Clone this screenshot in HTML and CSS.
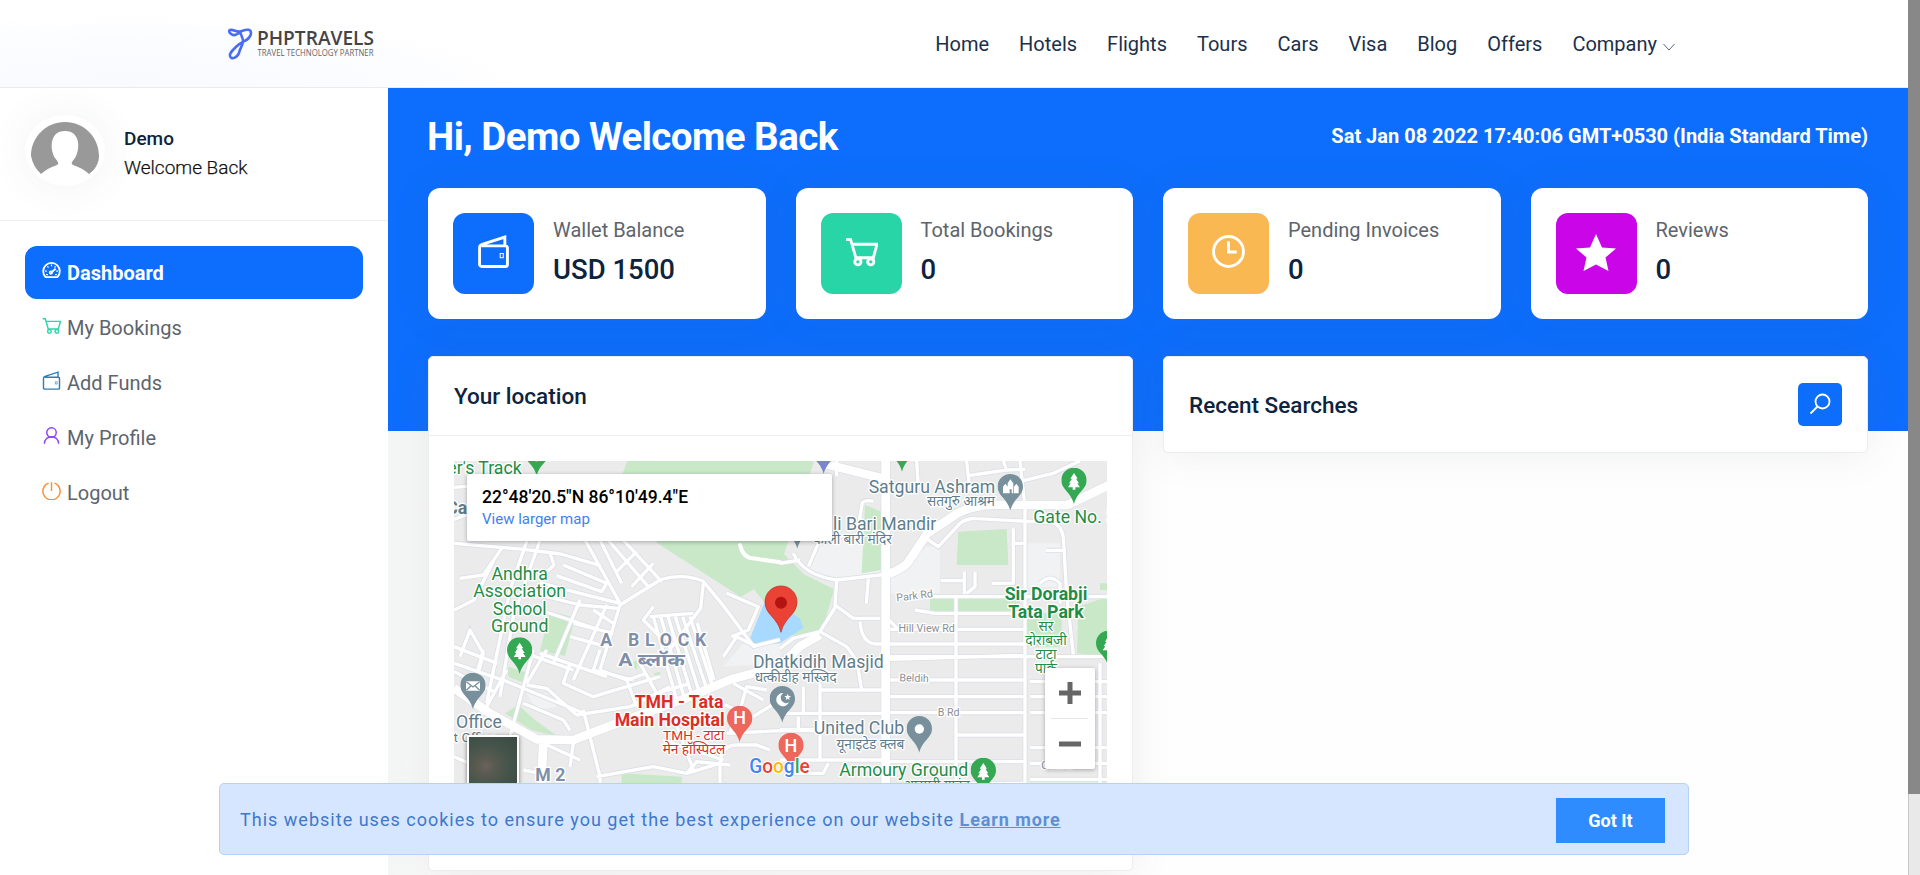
FILE: index.html
```html
<!DOCTYPE html>
<html lang="en">
<head>
<meta charset="utf-8">
<title>Dashboard - PHPTRAVELS</title>
<link rel="stylesheet" href="styles.css">
</head>
<body>
<svg class="sprite" aria-hidden="true">
  <symbol id="i-wallet" viewBox="0 0 32 32"><path d="M4.500 10.500h23a2 2 0 0 1 2 2v16a2 2 0 0 1-2 2h-23a2 2 0 0 1-2-2v-16a3.500 3.500 0 0 1 2.500-3.500L27 2v8"/><path class="dot" d="M22.500 18h3v4h-3z"/></symbol>
  <symbol id="i-cart" viewBox="0 0 32 32"><path d="M1 4.500h4.500l5 17.500h17l3.500-13H8"/><circle cx="12.500" cy="26" r="3"/><circle cx="25" cy="26" r="3"/></symbol>
  <symbol id="i-pin-tree" viewBox="0 0 76 110"><path d="M38 0C16 0 0 17 0 38c0 28 30 36 38 72 8-36 38-44 38-72C76 17 60 0 38 0z"/><path class="pin-art" d="M38 16 27 33h5L23 47h5L20 59h14v7h8v-7h14l-8-12h5l-9-14h5z"/></symbol>
  <symbol id="i-pin" viewBox="0 0 76 110"><path d="M38 0C16 0 0 17 0 38c0 28 30 36 38 72 8-36 38-44 38-72C76 17 60 0 38 0z"/></symbol>
</svg>
<div class="page">
  <header class="topbar">
    <svg class="logo" viewBox="0 0 154 40">
      <path class="logo-mark" d="M6 7C3 6 1 3 3 2c4-1 7 3 12 1s9-2 9 2c0 7-9 8-14 13-4 4-8 7-7 10 1 4 7 2 9-3 1-5 4-8 4-12 0-3-2-6-3-9M6 7c3 1 6-2 9-4"/>
      <text class="logo-name" x="30" y="17" textLength="117" lengthAdjust="spacingAndGlyphs">PHPTRAVELS</text>
      <text class="logo-tag" x="30.500" y="28" textLength="116" lengthAdjust="spacingAndGlyphs">TRAVEL TECHNOLOGY PARTNER</text>
    </svg>
    <nav class="menu">
      <a>Home</a><a>Hotels</a><a>Flights</a><a>Tours</a><a>Cars</a><a>Visa</a><a>Blog</a><a>Offers</a>
      <a>Company<svg class="caret" viewBox="0 0 12 8"><path d="M.5 1 6 7l5.500-6"/></svg></a>
    </nav>
  </header>
  <div class="columns">
    <aside class="sidebar">
      <div class="profile">
        <div class="avatar"><svg viewBox="0 0 68 52"><path d="M10 52A33 33 0 0 1 0 34C0 15 15 0 34 0s34 15 34 34c0 7-4 14-10 18-4-4-10-7-16-9-3-2 0-4 2-7 5-8 6-27-10-27S19 28 24 36c2 3 5 5 2 7-6 2-12 5-16 9z"/></svg></div>
        <div><div class="name">Demo</div><div class="greet">Welcome Back</div></div>
      </div>
      <nav class="side-nav">
        <a class="item active"><svg class="ico dash" viewBox="0 0 32 32"><path d="M6 27a14 14 0 1 1 20 0zM16 19l7-6"/><circle cx="15" cy="19.500" r="2"/><path class="ticks" d="M16 6v3M9 9l2 2M23 9l-2 2M5 17h3M27 17h-3M7 23h3M25 23h-3"/></svg>Dashboard</a>
        <a class="item"><svg class="ico green"><use href="#i-cart"/></svg>My Bookings</a>
        <a class="item"><svg class="ico blue"><use href="#i-wallet"/></svg>Add Funds</a>
        <a class="item"><svg class="ico violet" viewBox="0 0 32 32"><circle cx="16" cy="11" r="8"/><path d="M4 30c0-16 24-16 24 0"/></svg>My Profile</a>
        <a class="item"><svg class="ico orange" viewBox="0 0 32 32"><path d="M16 2v15M11 3.500a14.500 14.500 0 1 0 10 0"/></svg>Logout</a>
      </nav>
    </aside>
    <main class="content">
      <div class="hero-back"></div>
      <div class="inner">
        <div class="welcome"><h1>Hi, Demo Welcome Back</h1><p>Sat Jan 08 2022 17:40:06 GMT+0530 (India Standard Time)</p></div>
        <div class="stats">
          <div class="stat"><span class="tile t-blue"><svg class="big"><use href="#i-wallet"/></svg></span><div><p>Wallet Balance</p><h4>USD 1500</h4></div></div>
          <div class="stat"><span class="tile t-green"><svg class="big"><use href="#i-cart"/></svg></span><div><p>Total Bookings</p><h4>0</h4></div></div>
          <div class="stat"><span class="tile t-amber"><svg class="big" viewBox="0 0 32 32"><circle cx="16" cy="16" r="14.500"/><path d="M16 6v10.500h8"/></svg></span><div><p>Pending Invoices</p><h4>0</h4></div></div>
          <div class="stat"><span class="tile t-pink"><svg class="star" viewBox="0 0 40 37"><path d="m20 0 6 13.500 14 1-10.500 9L32.500 37 20 30.500 7.500 37l3-13.500L0 14.500l14-1z"/></svg></span><div><p>Reviews</p><h4>0</h4></div></div>
        </div>
        <div class="panels">
          <section class="panel">
            <h3>Your location</h3>
            <div class="map-body">
              <div class="map">
                <svg class="map-art" viewBox="42 33 1959 1152">
                  <defs>
                    <g id="minor">
                      <path d="M42 112 190 100 400 80M42 208l60-22M42 280l210 18 110 14 120 35M265 260 210 420 140 760M300 270 220 500 180 740M60 385l70-10 55-80M330 310l12 35-42 40M370 345l130 55-15 25-135-48M300 398l120 32 120 30M260 425l160 40 115 10M435 270l50 90 55 100M480 270l65 130M500 265l125 145M545 265l120 130M530 365l60-60M575 410l65-70"/>
                      <path d="M540 465 660 390q70-22 130 4 60 70 110 140l40 55 80-20M790 400l-8 75-90 120M540 465 480 660M500 465 400 690M420 450 340 640M300 480l180 60M400 520l120 30M390 560l110 30M300 610l200 70M860 430l95 40-30 70-50 20M460 480l60 40M42 480l60-30 60-120M42 590l130 50M60 620l30-80 40 70-20 80M42 640l160 55 230 95M42 665l120 60M130 600l-30 110M200 660l-60 110M280 600l-70 260M200 590l200 70M320 600l-60 100M390 640l-20 60 90 40 200-60M480 660l80 30 60-20M560 690l30 80M260 705l60 10 90 80 160-25 120-60M250 760l120 50 20 30M430 780l50 200 0 205M470 980l170-30 100 20 30-35 100 10M400 880l-10 70M310 880l110 50M250 960l50 10M42 920l160 70M160 940v120M640 470l-30 40 60 60M600 640l50 90 100-30"/>
                      <path d="M840 1185V950q0-65 50-65h60l40 15M860 850l160-8h120M740 970l100-30M670 870l180 60M700 800l60 160M850 620l40-60 60 30M880 700l90 50M800 740l90 40-20 70M900 780l20-70 60 10M940 800l80-50M480 600l-20 60 120 30"/>
                      <path d="M1060 310q30 65 130 80l147-17M1190 390l-5 75 55 40h80M1190 465l-50 80-80 20-40 30M1140 545l80 45 30 40 15 90M1260 515q5 67 50 67h445M1285 385l-6 75M1255 230l12-72q10-10 33-4M1105 350l30-70M1020 340l60-10M1140 720h197M1020 790h317M1090 710v85M1140 700v230M1075 800v35M1020 838h120M1020 930h317M1050 930v40h100l15-30M1190 33v45"/>
                      <path d="m1430 33 5 80M1580 33l10 90M1590 76l110-16 55-2M1690 33l10 27M1740 33l15 137M1750 92l90-22 80-37M1450 260l45 30 65-70q25-17 50-14l230 12q25 10 30 45l10 170 20 180M1720 235v165h-65M1720 280h35M1818 301h60M1502 392h72M1573 365v68M1605 365v45l-25 20M1480 440h521M1425 480l60 10h270M1548 440v490M1350 538h405M1350 628l405-12M1350 690h405M1350 740h405M1350 788h405M1548 855h207M1350 935h405M1560 1000h195M1548 930v160M1337 620h660M1755 170v1015M1770 695h231M1770 740h231M1770 788h231M1770 893h231M1770 940h231M1770 988h231M1980 640v545M1800 400q30-30 60 0v60M1337 500l40 40"/>
                      <path d="M640 500l70 250M662 500l70 240M684 500l70 230M706 500l70 220M728 500l70 210M750 500l65 200M772 520l50 170M630 500l130-10"/>
                    </g>
                    <g id="major">
                      <path d="M42 715 150 790l140 78 110 2 120-46 220-80 130-55 150-40 60-60 60-34M310 870l-14 315M1140 38l200 50M1337 33v1152M1337 375q60-20 75-50l50-75 90-60q60-30 140-25h190l130-62"/>
                    </g>
                  </defs>
                  <rect x="42" y="33" width="1959" height="1152" class="land"/>
                  <path class="plain" d="M1150 270h180v100l-140 20-90-30zM1350 370l110-80h40v140h-150zM1760 280h100v130h-100zM850 650l60-70 110-10v70zM260 730h60l30 40-60 10z"/>
                  <g class="park">
                    <path d="M562 33h560l-90 280 60 60 90 45-40 140-70 10-60-60-70-90-40 22-250-160L540 90z"/>
                    <path d="m330 483 75 20-30 115-75-15zM205 650l60 20-10 30-50-20zM195 790l40-25 50 45 70 50-80-20zM545 970l180 10v210H545zM1275 165l50 20v175l-60 10zM1555 245l145-8 5 108-155 0zM1470 445h270v40h-270zM1755 490h110v100h-110zM1915 470l86-30v180l-90-10zM1980 400h21v20h-21zM640 670l20-5v25zM570 640l25-10-5 30z"/>
                  </g>
                  <path class="water" d="M972 460 930 565l18 22 72-7 70-47-10-27-60-45z"/>
                  <use href="#minor" class="case"/><use href="#major" class="case wide"/>
                  <use href="#minor" class="road"/><use href="#major" class="road wide"/>
                  <path class="road trail" d="M900 285q10 40 40 40l80 12"/>
                  <g class="pin-green">
                    <use href="#i-pin-tree" x="252" y="-32" width="76" height="110"/><use href="#i-pin-tree" x="201" y="562" width="76" height="110"/>
                    <use href="#i-pin-tree" x="1348" y="-45" width="76" height="110"/><use href="#i-pin-tree" x="1864" y="53" width="76" height="110"/>
                    <use href="#i-pin-tree" x="1968" y="542" width="76" height="110"/><use href="#i-pin-tree" x="1592" y="923" width="76" height="110"/>
                  </g>
                  <g class="pin-slate">
                    <use href="#i-pin" x="61" y="668" width="76" height="110"/><use href="#i-pin" x="1673" y="72" width="76" height="110"/>
                    <use href="#i-pin" x="1034" y="186" width="76" height="110"/><use href="#i-pin" x="989" y="708" width="76" height="110"/><use href="#i-pin" x="1400" y="798" width="76" height="110"/>
                  </g>
                  <use href="#i-pin" class="pin-indigo" x="1113" y="-38" width="76" height="110"/>
                  <g class="pin-red"><use href="#i-pin" x="861" y="767" width="76" height="110"/><use href="#i-pin" x="1015" y="848" width="76" height="110"/></g>
                  <circle cx="1438" cy="837" r="14" class="white"/>
                  <path class="white" d="M78 694h42v28H78zM1689 130v-20l7-9 7 9v20zM1703 130v-30l8-12 9 12v30h-5v-12h-6v12zM1722 130v-20l7-9 7 9v20z"/>
                  <path class="envelope" d="m79 695 20 16 20-16M79 721l14-14M119 721l-14-14"/>
                  <path class="white" d="M1030 729a20 20 0 1 0 17 28 16 16 0 1 1-17-28zM1043 731l3 7h7l-6 5 2 7-6-4-6 4 2-7-6-5h7z"/>
                  <text class="h" x="899" y="822">H</text><text class="h" x="1053" y="906">H</text>
                  <g class="label green">
                    <text x="245" y="72" class="end">er's Track</text><text x="239" y="389">Andhra</text><text x="239" y="442">Association</text><text x="239" y="495">School</text><text x="239" y="547">Ground</text>
                    <text x="1391" y="978">Armoury Ground</text><text class="hi" x="1490" y="1020">आरमरी ग्राउंड</text><text x="1780" y="220" class="start">Gate No. 3</text>
                    <text class="bold" x="1818" y="450">Sir Dorabji</text><text class="bold" x="1818" y="503">Tata Park</text>
                    <text class="hi" x="1818" y="543">सर</text><text class="hi" x="1818" y="586">दोराबजी</text><text class="hi" x="1818" y="627">टाटा</text><text class="hi" x="1818" y="668">पार्क</text>
                  </g>
                  <g class="label slate">
                    <text x="1476" y="128">Satguru Ashram</text><text class="hi" x="1563" y="169">सतगुरु आश्रम</text>
                    <text x="1334" y="240">li Bari Mandir</text><text class="hi" x="1238" y="282">काली बारी मंदिर</text>
                    <text x="1135" y="654">Dhatkidih Masjid</text><text class="hi" x="1067" y="695">धत्कीडीह मस्जिद</text>
                    <text x="1257" y="853">United Club</text><text class="hi" x="1291" y="898">यूनाइटेड क्लब</text>
                    <text x="117" y="835">Office</text><text class="hi" x="95" y="876">st Office</text><text class="bold" x="50" y="192">Ca</text>
                  </g>
                  <g class="label area"><text x="640" y="589" textLength="318">A BLOCK</text><text x="635" y="649" textLength="200" lengthAdjust="spacingAndGlyphs">A ब्लॉक</text><text x="331" y="994">M 2</text></g>
                  <g class="label red"><text class="bold" x="717" y="775">TMH - Tata</text><text class="bold" x="689" y="827">Main Hospital</text><text class="hi" x="761" y="870">TMH - टाटा</text><text class="hi" x="762" y="911">मेन हॉस्पिटल</text></g>
                  <g class="label street"><text x="1424" y="448" transform="rotate(-7 1424 440)">Park Rd</text><text x="1460" y="547">Hill View Rd</text><text x="1422" y="695" transform="rotate(2 1422 690)">Beldih</text><text x="1526" y="798">B Rd</text><text x="1850" y="957">C Rd E</text></g>
                  <path class="marker" d="M1023 408c-27 0-48 21-48 48 0 38 38 46 48 91 10-45 48-53 48-91 0-27-21-48-48-48z"/><circle cx="1023" cy="458" r="18" class="marker-dot"/>
                  <text class="google" x="928" y="969" textLength="181" lengthAdjust="spacingAndGlyphs"><tspan fill="#4285f4">G</tspan><tspan fill="#ea4335">o</tspan><tspan fill="#fbbc04">o</tspan><tspan fill="#4285f4">g</tspan><tspan fill="#34a853">l</tspan><tspan fill="#ea4335">e</tspan></text>
                </svg>
                <div class="place"><b>22°48'20.5"N 86°10'49.4"E</b><a>View larger map</a></div>
                <div class="zoom"><svg viewBox="0 0 50 101"><path class="zoom-sign" d="M14 25h22M25 14v22M14 76h22"/><path class="zoom-line" d="M6 50.500h37"/></svg></div>
                <div class="satellite"></div>
              </div>
            </div>
          </section>
          <section class="panel recent">
            <h2>Recent Searches</h2>
            <span class="search"><svg viewBox="0 0 22 22"><circle cx="13.500" cy="8.500" r="7"/><path d="M8.500 13.500 1.500 20.500"/></svg></span>
          </section>
        </div>
      </div>
    </main>
  </div>
  <div class="cookie"><p>This website uses cookies to ensure you get the best experience on our website <a>Learn more</a></p><button>Got It</button></div>
</div>
<div class="scrollbar"><div class="thumb"></div></div>
</body>
</html>
```
FILE: styles.css
```css
* { box-sizing: border-box; }
body { margin: 0; height: 875px; overflow: hidden; display: flex; font-family: Roboto, "Noto Sans", sans-serif; color: #0d233e; background: #fff; }
h1, h2, h3, h4, p { margin: 0; }
.sprite { position: absolute; width: 0; height: 0; }
.page { width: 1908px; height: 875px; position: relative; overflow: hidden; }
.scrollbar { width: 12px; background: #e9e9e9; border-left: 1px solid #c8c8c8; }
.thumb { height: 794px; background: #888; margin-left: -1px; }

.topbar { height: 88px; border-bottom: 1px solid #ebebec; display: flex; justify-content: space-between; padding: 0 233px 0 227px; background: radial-gradient(ellipse 410px 75px at 130px 88px, #f8faff 0, #fbfcff 60%, #fff 100%); }
.logo { width: 154px; height: 40px; margin-top: 28px; overflow: visible; }
.logo-mark { fill: none; stroke: #4a6cf3; stroke-width: 2.6; }
.logo-name { font: 600 19.500px "Open Sans", sans-serif; fill: #444; }
.logo-tag { font: 400 9px "Open Sans", sans-serif; fill: #666; }
.menu { display: flex; gap: 30px; align-items: center; font-size: 20px; color: #1c3049; }
.caret { width: 12px; height: 8px; margin-left: 6px; fill: none; stroke: #56657a; stroke-width: 1; }

.columns { display: flex; height: 787px; }
.sidebar { width: 388px; background: #fff; }
.profile { height: 133px; border-bottom: 1px solid #eee; padding: 27px 25px; display: flex; gap: 19px; font-size: 19px; line-height: 29px; }
.profile .name { font-weight: 500; padding-top: 9px; }
.greet { color: #111; font-weight: 300; -webkit-text-stroke: .25px; }
.avatar { width: 80px; height: 71px; border-radius: 50%; box-shadow: 0 0 40px rgba(82,85,90,.08); padding: 7px 6px; }
.avatar svg { width: 68px; height: 52px; display: block; fill: #999; }
.side-nav { padding: 25px; display: grid; gap: 2px; }
.item { height: 53px; padding-left: 17px; display: flex; align-items: center; gap: 6px; font-size: 20px; color: #5d646d; border-radius: 12px; }
.active { background: #0d6efd; color: #fff; font-weight: 700; width: 338px; }
.ico { width: 19px; height: 19px; fill: none; stroke-width: 2.4; margin-top: -4px; }
.dot { stroke-width: 1; }
.dash { stroke: #fff; stroke-width: 3; }
.ticks { stroke-width: 2; }
.green { stroke: #28d5a7; }
.blue { stroke: #2a7ebd; }
.violet { stroke: #8b43f5; }
.orange { stroke: #fb8a2e; }

.content { width: 1520px; display: grid; background: linear-gradient(90deg, #f4f5f5 0, #f9f9f9 40px, #fdfdfd 730px, #fefefe 760px); }
.hero-back, .inner { grid-area: 1 / 1; }
.hero-back { height: 343px; background: #0d6efd; }
.inner { padding: 0 40px; }
.welcome { height: 100px; display: flex; align-items: center; justify-content: space-between; color: #fff; padding-bottom: 4px; }
.welcome h1 { font-size: 38.500px; font-weight: 700; letter-spacing: -.55px; margin-left: -1px; }
.welcome p { font-size: 20px; font-weight: 700; }
.stats { display: grid; grid-template-columns: repeat(4, 1fr); gap: 30px; }
.stat { height: 131px; background: #fff; border-radius: 12px; padding: 25px; display: flex; gap: 19px; box-shadow: 0 0 40px rgba(82,85,90,.08); }
.tile { width: 81px; height: 81px; border-radius: 12px; display: grid; place-items: center; }
.big { width: 33px; height: 33px; margin-top: -4px; fill: none; stroke: #fff; stroke-width: 2.8; }
.star { width: 40px; height: 37px; margin-top: -3px; fill: #fff; }
.t-blue { background: #0d6efd; }
.t-green { background: #28d5a7; }
.t-amber { background: #f9b851; }
.t-pink { background: #ca06e8; }
.stat p { font-size: 20px; line-height: 24px; padding-top: 5px; color: #5d646d; }
.stat h4 { font-size: 27.500px; font-weight: 500; line-height: 34px; margin-top: 11px; }

.panels { display: grid; grid-template-columns: 1fr 1fr; gap: 30px; margin-top: 37px; align-items: start; }
.panel { background: #fff; border-radius: 5px; border: 1px solid #ededee; box-shadow: 0 0 40px rgba(82,85,90,.1); }
.panel h3, .panel h2 { font-size: 22.500px; font-weight: 500; }
.panel h3 { height: 79px; line-height: 78px; padding-left: 25px; border-bottom: 1px solid #eee; }
.map-body { padding: 25px; height: 434px; }
.map { position: relative; height: 384px; overflow: hidden; }
.map-art { width: 100%; height: 100%; display: block; }
.recent { height: 97px; display: flex; justify-content: space-between; align-items: center; padding: 0 25px; }
.search { width: 44px; height: 43px; border-radius: 5px; background: #0d6efd; display: grid; place-items: center; }
.search svg { width: 22px; height: 22px; fill: none; stroke: #fff; stroke-width: 1.8; margin-top: -2px; }

.land { fill: #ebebeb; }
.plain { fill: #f1f2f4; }
.park { fill: #c8e8c8; }
.water { fill: #a8daff; }
.case { fill: none; stroke: #dcdfe5; stroke-width: 15; }
.road { fill: none; stroke: #fff; stroke-width: 10; stroke-linejoin: round; }
.case.wide { stroke-width: 30; }
.road.wide { stroke-width: 26; }
.trail { stroke-width: 12; stroke-linecap: round; }
.pin-green { fill: #34a853; }
.pin-slate { fill: #78909c; }
.pin-indigo { fill: #7986cb; }
.pin-red { fill: #ee675c; }
.pin-art, .white { fill: #fff; }
.envelope { fill: none; stroke: #78909c; stroke-width: 4; }
.h { font-size: 54px; font-weight: 500; fill: #fff; text-anchor: middle; }
.label { font-size: 53px; text-anchor: middle; stroke: #fff; stroke-width: 8; stroke-linejoin: round; paint-order: stroke; }
.label .hi { font-size: 41px; }
.label .bold { font-weight: 700; }
.label .end { text-anchor: end; }
.label .start { text-anchor: start; }
.label.green { fill: #1e8e46; }
.label.slate { fill: #607d8b; }
.label.red { fill: #db2d27; }
.label.area { fill: #7f8fa9; font-weight: 700; }
.label.street { fill: #8a8f94; font-size: 32px; }
.marker { fill: #ea4335; stroke: #c5221f; stroke-width: 2; }
.marker-dot { fill: #b31412; }
.google { font-size: 60px; font-weight: 500; stroke: #fff; stroke-width: 6; paint-order: stroke; }
.place { position: absolute; left: 13px; top: 13px; width: 365px; height: 67px; padding: 12px 15px; background: #fff; border-radius: 2px; box-shadow: 0 1px 4px rgba(0,0,0,.3); color: #000; }
.place b { display: block; font-size: 17.500px; font-weight: 500; line-height: 22px; }
.place a { font-size: 15px; line-height: 23px; color: #427fed; display: block; }
.zoom { position: absolute; left: 591px; top: 207px; width: 50px; height: 101px; background: #fff; border-radius: 2px; box-shadow: 0 1px 4px rgba(0,0,0,.3); }
.zoom-sign { stroke: #666; stroke-width: 5; }
.zoom-line { stroke: #e6e6e6; stroke-width: 1; }
.satellite { position: absolute; left: 13px; top: 274px; width: 52px; height: 52px; border: 2px solid #fff; border-radius: 2px; box-shadow: 0 1px 4px rgba(0,0,0,.5); background: radial-gradient(ellipse at 35% 60%, #6b625c 0, #5a5a50 20%, #46554b 50%, #3a4a42 100%); }

.cookie { position: absolute; left: 219px; top: 783px; width: 1470px; height: 72px; border: 1px solid #b3d1fb; border-radius: 5px; background: #d7e6ff; display: flex; align-items: center; justify-content: space-between; padding: 3px 23px 0 20px; color: #3f78c9; font-size: 18px; letter-spacing: 1.01px; }
.cookie p { padding-bottom: 3px; }
.cookie a { font-weight: 700; text-decoration: underline; color: #5e8fd2; letter-spacing: .9px; }
.cookie button { width: 109px; height: 45px; border: 0; background: #2f8cff; color: #fff; font: 700 18px Roboto, sans-serif; padding: 0; }
```
